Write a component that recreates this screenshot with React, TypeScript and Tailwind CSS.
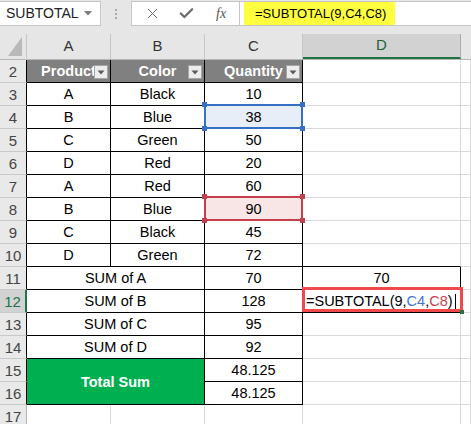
import { Check, X } from 'lucide-react';
import type { ReactNode } from 'react';

const COLS = 'grid grid-cols-[27px_84px_94px_98px_158px_1fr]';

function RowHead({ n, sel }: { n: number; sel?: boolean }) {
  return (
    <div
      className={
        'flex items-center justify-center pt-[2px] border-b border-[#c9c9c9] text-[15px] ' +
        (sel
          ? 'bg-[#d2d2d2] text-[#217346] border-r-2 border-r-[#217346]'
          : n <= 16
            ? 'bg-[#e9e9e9] text-[#444] border-r border-r-black'
            : 'bg-[#e9e9e9] text-[#444] border-r border-r-[#b5b5b5]')
      }
    >
      {n}
    </div>
  );
}

// black-bordered table cell
function Cell({ children, className = '' }: { children?: ReactNode; className?: string }) {
  return (
    <div className={'flex items-center justify-center pt-[2px] border-r border-b border-black ' + className}>
      {children}
    </div>
  );
}

// empty sheet cell with light gridlines
function Blank({ className = '' }: { className?: string }) {
  return <div className={'border-r border-b border-[#dadada] ' + className} />;
}

function FilterBtn() {
  return (
    <div className="absolute right-[2px] top-[5px] w-[14px] h-[14px] bg-[#ededed] border border-[#a6a6a6] flex items-center justify-center">
      <svg width="8" height="5" viewBox="0 0 8 5">
        <path d="M0.5 0.5h7L4 4.5z" fill="#5b5b5b" />
      </svg>
    </div>
  );
}

function HeadCell({ label }: { label: string }) {
  return (
    <div className="relative flex items-center justify-center pt-[1px] bg-[#808080] border-r border-b border-black text-white font-bold text-[14.5px]">
      {label}
      <FilterBtn />
    </div>
  );
}

// range highlight shown while a formula is being edited
function RefBox({ border, dot, fill }: { border: string; dot: string; fill: string }) {
  return (
    <>
      <div className={'absolute inset-0 ' + fill} />
      <div className={'absolute -left-px -right-px -top-[2px] -bottom-px border-2 ' + border} />
      <div className={'absolute -left-[3px] -top-[4px] w-[5px] h-[5px] ' + dot} />
      <div className={'absolute -right-[3px] -top-[4px] w-[5px] h-[5px] ' + dot} />
      <div className={'absolute -left-[3px] -bottom-[3px] w-[5px] h-[5px] ' + dot} />
      <div className={'absolute -right-[3px] -bottom-[3px] w-[5px] h-[5px] ' + dot} />
    </>
  );
}

const data = [
  ['A', 'Black', '10'],
  ['B', 'Blue', '38'],
  ['C', 'Green', '50'],
  ['D', 'Red', '20'],
  ['A', 'Red', '60'],
  ['B', 'Blue', '90'],
  ['C', 'Black', '45'],
  ['D', 'Green', '72'],
];

export default function App() {
  return (
    <div className="w-[471px] h-[424px] overflow-hidden bg-white text-black font-['Liberation_Sans',Arial,sans-serif]">
      {/* formula bar */}
      <div className="h-[34px] bg-[#e6e6e6] flex items-start pt-[1px]">
        <div className="w-[101px] h-[25px] bg-white border border-l-0 border-[#c6c6c6] flex items-center justify-between pl-[6px] pr-[8px]">
          <span className="text-[14px] text-[#222]">SUBTOTAL</span>
          <svg width="8" height="5" viewBox="0 0 8 5">
            <path d="M0 0h8L4 4.5z" fill="#7a7a7a" />
          </svg>
        </div>
        <div className="w-[30px] h-[25px] flex flex-col items-center justify-center gap-[2px]">
          <span className="w-[2px] h-[2px] bg-[#a9a9a9]" />
          <span className="w-[2px] h-[2px] bg-[#a9a9a9]" />
          <span className="w-[2px] h-[2px] bg-[#a9a9a9]" />
        </div>
        <div className="w-[109px] h-[25px] bg-white border border-[#c6c6c6] flex items-center pl-[12px] text-[#6a6a6a]">
          <X size={17} strokeWidth={1.4} />
          <Check size={17} strokeWidth={3.2} className="ml-[17px]" />
          <span className="ml-[21px] italic text-[14px] font-['Liberation_Serif',serif] text-[#555]">fx</span>
        </div>
        <div className="flex-1 h-[25px] bg-white border-y border-[#c6c6c6] pl-[4px]">
          <div className="w-[151px] h-full bg-[#ffff3f] flex items-center pl-[11px] text-[13px]">
            =SUBTOTAL(9,C4,C8)
          </div>
        </div>
      </div>

      {/* column headers */}
      <div className={COLS + ' h-[26px] bg-[#e6e6e6] border-b border-[#b5b5b5] text-[15px] text-[#333]'}>
        <div className="relative border-r border-[#c6c6c6]">
          <svg className="absolute right-[4px] bottom-[3px]" width="14" height="19" viewBox="0 0 14 19">
            <path d="M14 0V19H0z" fill="#b9b9b9" />
          </svg>
        </div>
        <div className="flex items-center justify-center border-r border-[#c6c6c6]">A</div>
        <div className="flex items-center justify-center border-r border-[#c6c6c6]">B</div>
        <div className="flex items-center justify-center border-r border-[#c6c6c6]">C</div>
        <div className="flex items-center justify-center bg-[#d2d2d2] border-r border-[#ababab] border-b-2 border-b-[#217346] text-[#1f5f3a]">
          D
        </div>
        <div />
      </div>

      {/* sheet */}
      <div className={COLS + ' auto-rows-[23px] text-[14.5px]'}>
        <RowHead n={2} />
        <HeadCell label="Product" />
        <HeadCell label="Color" />
        <HeadCell label="Quantity" />
        <Blank />
        <Blank />

        {data.map(([p, c, q], i) => {
          const n = i + 3;
          return (
            <div key={n} className="contents">
              <RowHead n={n} />
              <Cell>{p}</Cell>
              <Cell>{c}</Cell>
              {n === 4 ? (
                <Cell className="relative">
                  <RefBox border="border-[#3470c6]" dot="bg-[#3470c6]" fill="bg-[#e8eef8]" />
                  <span className="relative">{q}</span>
                </Cell>
              ) : n === 8 ? (
                <Cell className="relative">
                  <RefBox border="border-[#c3404b]" dot="bg-[#c3404b]" fill="bg-[#f8e5e6]" />
                  <span className="relative">{q}</span>
                </Cell>
              ) : (
                <Cell>{q}</Cell>
              )}
              <Blank className={n === 10 ? 'border-b-black' : ''} />
              <Blank />
            </div>
          );
        })}

        <RowHead n={11} />
        <Cell className="col-span-2">SUM of A</Cell>
        <Cell>70</Cell>
        <Cell>70</Cell>
        <Blank />

        <RowHead n={12} sel />
        <Cell className="col-span-2">SUM of B</Cell>
        <Cell>128</Cell>
        <div className="relative flex items-center pl-[3px] pt-[2px] border-r border-b border-black">
          <span>=SUBTOTAL(9,</span>
          <span className="text-[#3f76d3]">C4</span>
          <span>,</span>
          <span className="text-[#c8414e]">C8</span>
          <span>)</span>
          <span className="ml-[2px] w-px h-[17px] bg-black" />
          <div className="absolute -left-px -right-[3px] -top-[3px] bottom-0 border-[3px] border-[#f24a4a]" />
          <div className="absolute -right-[4px] -bottom-[2px] w-[4px] h-[4px] bg-[#217346]" />
        </div>
        <Blank />

        <RowHead n={13} />
        <Cell className="col-span-2">SUM of C</Cell>
        <Cell>95</Cell>
        <Blank />
        <Blank />

        <RowHead n={14} />
        <Cell className="col-span-2">SUM of D</Cell>
        <Cell>92</Cell>
        <Blank />
        <Blank />

        <RowHead n={15} />
        <Cell className="col-span-2 row-span-2 bg-[#00b050] text-white font-bold">Total Sum</Cell>
        <Cell>48.125</Cell>
        <Blank />
        <Blank />

        <RowHead n={16} />
        <Cell>48.125</Cell>
        <Blank />
        <Blank />

        <RowHead n={17} />
        <Blank />
        <Blank />
        <Blank />
        <Blank />
        <Blank />
      </div>
    </div>
  );
}
